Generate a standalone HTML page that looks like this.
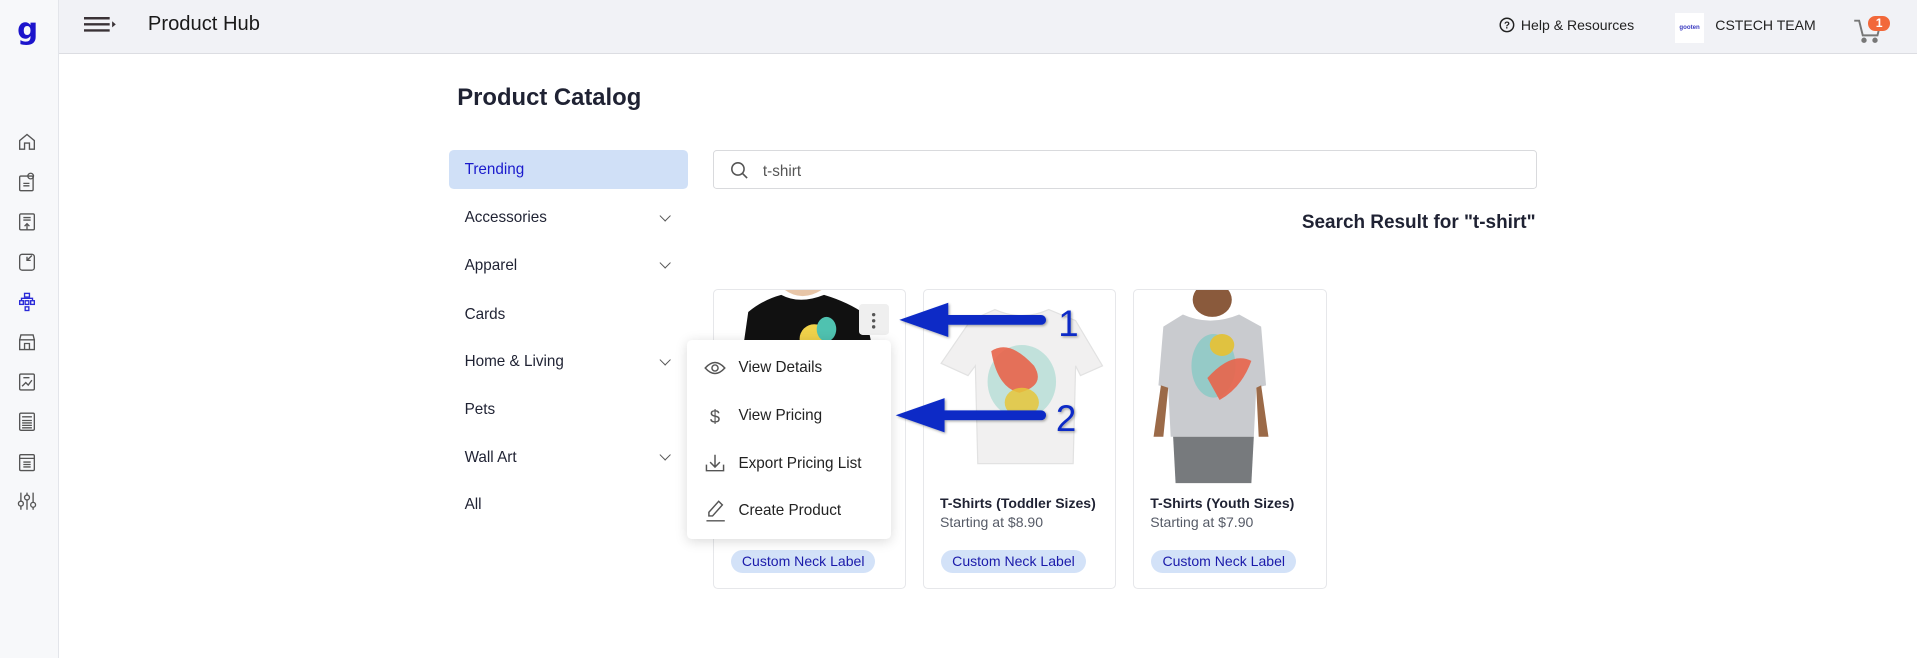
<!DOCTYPE html>
<html><head><meta charset="utf-8"><style>
html,body{margin:0;padding:0;background:#fff;overflow:hidden}
body{width:1917px;height:658px}
#w{width:1568px;height:538px;zoom:1.2226;position:relative;font-family:"Liberation Sans",sans-serif;color:#1f2233}
.a{position:absolute}
.side{left:0;top:0;width:48px;height:538px;background:#f7f8fa;border-right:1px solid #e3e5ea;box-sizing:border-box}
.hdr{left:48px;top:0;width:1520px;height:44px;background:#f1f2f6;border-bottom:1px solid #dcdde2;box-sizing:border-box}
.cat{left:380px;font-size:12.5px;color:#1f2233}
.chev{left:541px;width:6px;height:6px;border-right:1.3px solid #555;border-bottom:1.3px solid #555;transform:rotate(45deg)}
.card{width:158px;height:246px;border:1px solid #e6e7ea;border-radius:4px;box-sizing:border-box;top:236px;background:#fff;overflow:hidden}
.ttl{font-size:11.5px;font-weight:bold;color:#1f2233}
.pr{font-size:11.5px;color:#555a66}
.bd{height:19px;line-height:19px;padding:0 9px;border-radius:10px;background:#d3e2f8;color:#1a1aaa;font-size:11.5px}
.mi{left:604px;font-size:12.5px;color:#222}
</style></head><body><div id="w">
<div class="a side"></div>
<div class="a" style="left:14px;top:10px;font-size:24px;font-weight:bold;color:#1c14cc;font-family:'DejaVu Sans',sans-serif">g</div>
<svg class="a" style="left:13px;top:108px" width="18" height="320" viewBox="0 0 18 320" fill="none" stroke="#555" stroke-width="1.1">
<path d="M3 14V7l6-5 6 5v7h-4v-5H7v5z"/>
<g transform="translate(0,33)"><rect x="3" y="3" width="11" height="12" rx="1"/><circle cx="12" cy="3" r="2.3"/><path d="M6 9h5M6 11h5"/></g>
<g transform="translate(0,66)"><rect x="3" y="1" width="12" height="13" rx="1"/><path d="M6 4h6M6 6h6M9 14V9M7 11l2-2 2 2"/></g>
<g transform="translate(0,98)"><rect x="3" y="2" width="12" height="13" rx="2"/><path d="M13 3l-4 4M9 4v3h3"/></g>
<g transform="translate(0,131)" stroke="#2a2ad8"><rect x="7" y="1" width="4" height="3"/><rect x="3" y="7" width="3" height="3"/><rect x="7.5" y="7" width="3" height="3"/><rect x="12" y="7" width="3" height="3"/><rect x="7.5" y="12" width="3" height="3"/><path d="M4.5 7V5h9v2"/></g>
<g transform="translate(0,164)"><path d="M3 6l1-4h10l1 4M3 6h12v8H3zM7 14v-5h4v5"/></g>
<g transform="translate(0,196)"><rect x="3" y="2" width="12" height="13" rx="1"/><path d="M5 12l3-3 2 2 3-4M6 5h5"/></g>
<g transform="translate(0,229)"><rect x="3" y="1" width="12" height="14" rx="1"/><path d="M5 4h8M5 7h8M5 9h8M5 11h8M5 13h8"/></g>
<g transform="translate(0,262)"><rect x="3" y="2" width="12" height="13" rx="1"/><path d="M3 5h12M6 8h6M6 10h6M6 12h6"/></g>
<g transform="translate(0,294)"><path d="M4 1v14M9 1v14M14 1v14"/><circle cx="4" cy="10" r="2" fill="#f7f8fa"/><circle cx="9" cy="5" r="2" fill="#f7f8fa"/><circle cx="14" cy="11" r="2" fill="#f7f8fa"/></g>
</svg>
<div class="a hdr"></div>
<svg class="a" style="left:69px;top:14px" width="28" height="12"><path d="M0 1h21M0 6h21M0 11h21" stroke="#3a3236" stroke-width="2"/><path d="M23 3.5l3 2.5-3 2.5z" fill="#3a3236"/></svg>
<div class="a" style="left:121px;top:11px;font-size:16.5px;color:#1a1a1a">Product Hub</div>
<svg class="a" style="left:1226px;top:14px" width="13" height="13"><circle cx="6.5" cy="6.5" r="5.5" fill="none" stroke="#222" stroke-width="1.2"/><text x="6.5" y="9.5" font-size="8" text-anchor="middle" font-family="Liberation Sans" font-weight="bold" fill="#222">?</text></svg>
<div class="a" style="left:1244px;top:14px;font-size:11.5px;color:#222">Help &amp; Resources</div>
<div class="a" style="left:1370px;top:11px;width:24px;height:24px;background:#fff;font-size:5px;color:#3a3ac0;line-height:24px;text-align:center;font-weight:bold">gooten</div>
<div class="a" style="left:1403px;top:14px;font-size:11.5px;color:#222">CSTECH TEAM</div>
<svg class="a" style="left:1516px;top:14px" width="26" height="22" fill="none" stroke="#777" stroke-width="1.6"><path d="M1 3h4l3 12h12l2-8"/><circle cx="9" cy="19" r="1.4" fill="#777"/><circle cx="18" cy="19" r="1.4" fill="#777"/></svg>
<div class="a" style="left:1528px;top:13px;width:18px;height:12px;border-radius:6px;background:#f2683a;color:#fff;font-size:10px;font-weight:bold;text-align:center;line-height:12px">1</div>

<div class="a" style="left:374px;top:69px;font-size:19.5px;font-weight:bold;color:#1f2233">Product Catalog</div>
<div class="a" style="left:367px;top:123px;width:196px;height:32px;background:#d0e0f7;border-radius:4px"></div>
<div class="a cat" style="top:132px;color:#1a1acc">Trending</div>
<div class="a cat" style="top:171px">Accessories</div><div class="a chev" style="top:173px"></div>
<div class="a cat" style="top:210px">Apparel</div><div class="a chev" style="top:212px"></div>
<div class="a cat" style="top:250px">Cards</div>
<div class="a cat" style="top:289px">Home &amp; Living</div><div class="a chev" style="top:291px"></div>
<div class="a cat" style="top:328px">Pets</div>
<div class="a cat" style="top:367px">Wall Art</div><div class="a chev" style="top:369px"></div>
<div class="a cat" style="top:406px">All</div>

<div class="a" style="left:583px;top:123px;width:674px;height:32px;border:1px solid #d9dadd;border-radius:3px;box-sizing:border-box"></div>
<svg class="a" style="left:597px;top:132px" width="15" height="15" fill="none" stroke="#555" stroke-width="1.3"><circle cx="6.5" cy="6.5" r="5"/><path d="M10 10l4 4"/></svg>
<div class="a" style="left:624px;top:133px;font-size:12.5px;color:#555">t-shirt</div>
<div class="a" style="left:900px;width:356px;text-align:right;top:173px;font-size:15.5px;font-weight:bold;color:#1f2233">Search Result for "t-shirt"</div>

<div class="a card" style="left:583px">
<svg width="158" height="60" style="position:absolute;left:0;top:0"><path d="M22 60L28 18Q40 8 55 4Q70 12 90 4Q110 10 124 20L132 60z" fill="#111"/><path d="M58 0Q72 10 88 0" fill="#e8c6a8"/><circle cx="82" cy="40" r="12" fill="#f0d24a"/><ellipse cx="92" cy="32" rx="8" ry="10" fill="#4fc2b0"/><ellipse cx="75" cy="50" rx="10" ry="6" fill="#a9ddd6"/></svg>
<div class="a bd" style="left:14px;top:213px">Custom Neck Label</div>
</div>
<div class="a card" style="left:755px">
<svg width="158" height="150" style="position:absolute;left:0;top:0"><path d="M38 25L58 16Q80 26 102 16L124 25L146 62L128 70L124 62L122 142L44 142L42 62L36 70L14 60z" fill="#f1f0f0" stroke="#e2e2e2"/><ellipse cx="80" cy="75" rx="28" ry="30" fill="#b5ddd6" opacity=".8"/><path d="M55 50Q70 40 90 62Q100 78 78 84Q60 80 55 50z" fill="#e8644a" opacity=".9"/><ellipse cx="80" cy="92" rx="14" ry="12" fill="#e6c53a" opacity=".85"/></svg>
<div class="a ttl" style="left:13px;top:168px">T-Shirts (Toddler Sizes)</div>
<div class="a pr" style="left:13px;top:184px">Starting at $8.90</div>
<div class="a bd" style="left:14px;top:213px">Custom Neck Label</div>
</div>
<div class="a card" style="left:927px">
<svg width="158" height="160" style="position:absolute;left:0;top:0"><ellipse cx="64" cy="8" rx="16" ry="14" fill="#8a5a3c"/><path d="M40 20Q62 30 86 20L104 30L108 78L100 80L98 120L30 120L28 80L20 78L24 30z" fill="#c9cbcf"/><path d="M22 78L16 120L24 120L28 80zM104 78L110 120L102 120L100 80z" fill="#9b6a48"/><path d="M32 120L98 120L96 158L34 158z" fill="#777a7d"/><ellipse cx="65" cy="62" rx="18" ry="26" fill="#88c9c4" opacity=".8"/><ellipse cx="72" cy="45" rx="10" ry="9" fill="#e0c240"/><path d="M60 72Q80 50 96 58Q88 80 70 90z" fill="#e8644a" opacity=".9"/></svg>
<div class="a ttl" style="left:13px;top:168px">T-Shirts (Youth Sizes)</div>
<div class="a pr" style="left:13px;top:184px">Starting at $7.90</div>
<div class="a bd" style="left:14px;top:213px">Custom Neck Label</div>
</div>

<div class="a" style="left:703px;top:249px;width:24px;height:25px;background:#efefef;border-radius:3px"></div>
<svg class="a" style="left:712px;top:254px" width="6" height="16"><circle cx="3" cy="3" r="1.4" fill="#555"/><circle cx="3" cy="8" r="1.4" fill="#555"/><circle cx="3" cy="13" r="1.4" fill="#555"/></svg>

<div class="a" style="left:562px;top:278px;width:167px;height:163px;background:#fff;border-radius:4px;box-shadow:0 2px 10px rgba(0,0,0,.15)"></div>
<svg class="a" style="left:576px;top:292px" width="20" height="140" fill="none" stroke="#555" stroke-width="1.2">
<path d="M1 9Q9 0 17 9Q9 18 1 9z"/><circle cx="9" cy="9" r="2.5"/>
<text x="9" y="54" font-size="15" text-anchor="middle" fill="#555" stroke="none" font-family="Liberation Sans">$</text>
<path d="M9 80v10M5 86l4 4 4-4M2 88v5h14v-5"/>
<path d="M4 127l8-9 3 3-8 9H4zM2 134h15"/>
</svg>
<div class="a mi" style="top:294px">View Details</div>
<div class="a mi" style="top:333px">View Pricing</div>
<div class="a mi" style="top:372px">Export Pricing List</div>
<div class="a mi" style="top:411px">Create Product</div>

<svg class="a" style="left:730px;top:240px" width="170" height="120">
<defs><filter id="s"><feDropShadow dx="1" dy="1" stdDeviation="1" flood-opacity=".35"/></filter></defs>
<g filter="url(#s)" fill="#0a2cc6"><path d="M6 22L46 8V36z"/><rect x="40" y="18" width="86" height="8" rx="4"/>
<path d="M3 100L43 86V114z"/><rect x="38" y="96" width="88" height="8" rx="4"/>
<text x="136" y="35" font-size="30" font-family="Liberation Sans">1</text>
<text x="134" y="113" font-size="30" font-family="Liberation Sans">2</text></g>
</svg>
</div></body></html>
